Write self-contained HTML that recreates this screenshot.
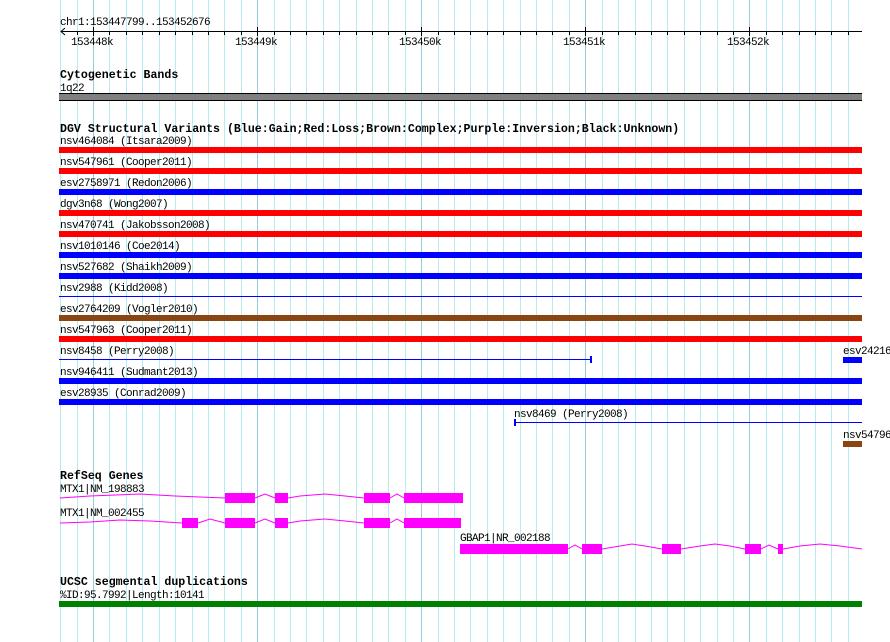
<!DOCTYPE html>
<html><head><meta charset="utf-8"><style>
html,body{margin:0;padding:0;background:#fff;}
svg{display:block;}
text{font-family:"Liberation Mono",monospace;font-size:11px;letter-spacing:-0.6px;fill:#000;}
.t{font-weight:bold;font-size:11.6px;letter-spacing:0;}
</style></head><body>
<svg width="890" height="642" xmlns="http://www.w3.org/2000/svg">
<g stroke="#b4ecef" stroke-width="1">
<line x1="60.5" y1="0" x2="60.5" y2="642"/><line x1="77.5" y1="0" x2="77.5" y2="642"/>
<line x1="109.5" y1="0" x2="109.5" y2="642"/><line x1="126.5" y1="0" x2="126.5" y2="642"/><line x1="142.5" y1="0" x2="142.5" y2="642"/><line x1="159.5" y1="0" x2="159.5" y2="642"/><line x1="175.5" y1="0" x2="175.5" y2="642"/><line x1="192.5" y1="0" x2="192.5" y2="642"/><line x1="208.5" y1="0" x2="208.5" y2="642"/><line x1="224.5" y1="0" x2="224.5" y2="642"/><line x1="241.5" y1="0" x2="241.5" y2="642"/>
<line x1="274.5" y1="0" x2="274.5" y2="642"/><line x1="290.5" y1="0" x2="290.5" y2="642"/><line x1="306.5" y1="0" x2="306.5" y2="642"/><line x1="323.5" y1="0" x2="323.5" y2="642"/><line x1="339.5" y1="0" x2="339.5" y2="642"/><line x1="356.5" y1="0" x2="356.5" y2="642"/><line x1="372.5" y1="0" x2="372.5" y2="642"/><line x1="388.5" y1="0" x2="388.5" y2="642"/><line x1="405.5" y1="0" x2="405.5" y2="642"/>
<line x1="438.5" y1="0" x2="438.5" y2="642"/><line x1="454.5" y1="0" x2="454.5" y2="642"/><line x1="470.5" y1="0" x2="470.5" y2="642"/><line x1="487.5" y1="0" x2="487.5" y2="642"/><line x1="503.5" y1="0" x2="503.5" y2="642"/><line x1="520.5" y1="0" x2="520.5" y2="642"/><line x1="536.5" y1="0" x2="536.5" y2="642"/><line x1="552.5" y1="0" x2="552.5" y2="642"/><line x1="569.5" y1="0" x2="569.5" y2="642"/>
<line x1="602.5" y1="0" x2="602.5" y2="642"/><line x1="618.5" y1="0" x2="618.5" y2="642"/><line x1="635.5" y1="0" x2="635.5" y2="642"/><line x1="651.5" y1="0" x2="651.5" y2="642"/><line x1="667.5" y1="0" x2="667.5" y2="642"/><line x1="684.5" y1="0" x2="684.5" y2="642"/><line x1="700.5" y1="0" x2="700.5" y2="642"/><line x1="717.5" y1="0" x2="717.5" y2="642"/><line x1="733.5" y1="0" x2="733.5" y2="642"/>
<line x1="766.5" y1="0" x2="766.5" y2="642"/><line x1="782.5" y1="0" x2="782.5" y2="642"/><line x1="799.5" y1="0" x2="799.5" y2="642"/><line x1="815.5" y1="0" x2="815.5" y2="642"/><line x1="831.5" y1="0" x2="831.5" y2="642"/><line x1="848.5" y1="0" x2="848.5" y2="642"/>
</g>
<g stroke="#94cce0" stroke-width="1">
<line x1="93.5" y1="0" x2="93.5" y2="642"/><line x1="257.5" y1="0" x2="257.5" y2="642"/><line x1="421.5" y1="0" x2="421.5" y2="642"/><line x1="585.5" y1="0" x2="585.5" y2="642"/><line x1="749.5" y1="0" x2="749.5" y2="642"/>
</g>
<text x="60" y="25">chr1:153447799..153452676</text>
<line x1="61" y1="31.5" x2="862" y2="31.5" stroke="#000"/>
<polyline points="65,28 61,31.5 65,35" fill="none" stroke="#000"/>
<g stroke="#000">
<line x1="77.5" y1="31" x2="77.5" y2="35"/><line x1="93.5" y1="27" x2="93.5" y2="36"/><line x1="109.5" y1="31" x2="109.5" y2="35"/><line x1="126.5" y1="31" x2="126.5" y2="35"/><line x1="142.5" y1="31" x2="142.5" y2="35"/><line x1="159.5" y1="31" x2="159.5" y2="35"/><line x1="175.5" y1="31" x2="175.5" y2="35"/><line x1="192.5" y1="31" x2="192.5" y2="35"/><line x1="208.5" y1="31" x2="208.5" y2="35"/><line x1="224.5" y1="31" x2="224.5" y2="35"/><line x1="241.5" y1="31" x2="241.5" y2="35"/><line x1="257.5" y1="27" x2="257.5" y2="36"/><line x1="274.5" y1="31" x2="274.5" y2="35"/><line x1="290.5" y1="31" x2="290.5" y2="35"/><line x1="306.5" y1="31" x2="306.5" y2="35"/><line x1="323.5" y1="31" x2="323.5" y2="35"/><line x1="339.5" y1="31" x2="339.5" y2="35"/><line x1="356.5" y1="31" x2="356.5" y2="35"/><line x1="372.5" y1="31" x2="372.5" y2="35"/><line x1="388.5" y1="31" x2="388.5" y2="35"/><line x1="405.5" y1="31" x2="405.5" y2="35"/><line x1="421.5" y1="27" x2="421.5" y2="36"/><line x1="438.5" y1="31" x2="438.5" y2="35"/><line x1="454.5" y1="31" x2="454.5" y2="35"/><line x1="470.5" y1="31" x2="470.5" y2="35"/><line x1="487.5" y1="31" x2="487.5" y2="35"/><line x1="503.5" y1="31" x2="503.5" y2="35"/><line x1="520.5" y1="31" x2="520.5" y2="35"/><line x1="536.5" y1="31" x2="536.5" y2="35"/><line x1="552.5" y1="31" x2="552.5" y2="35"/><line x1="569.5" y1="31" x2="569.5" y2="35"/><line x1="585.5" y1="27" x2="585.5" y2="36"/><line x1="602.5" y1="31" x2="602.5" y2="35"/><line x1="618.5" y1="31" x2="618.5" y2="35"/><line x1="635.5" y1="31" x2="635.5" y2="35"/><line x1="651.5" y1="31" x2="651.5" y2="35"/><line x1="667.5" y1="31" x2="667.5" y2="35"/><line x1="684.5" y1="31" x2="684.5" y2="35"/><line x1="700.5" y1="31" x2="700.5" y2="35"/><line x1="717.5" y1="31" x2="717.5" y2="35"/><line x1="733.5" y1="31" x2="733.5" y2="35"/><line x1="749.5" y1="27" x2="749.5" y2="36"/><line x1="766.5" y1="31" x2="766.5" y2="35"/><line x1="782.5" y1="31" x2="782.5" y2="35"/><line x1="799.5" y1="31" x2="799.5" y2="35"/><line x1="815.5" y1="31" x2="815.5" y2="35"/><line x1="831.5" y1="31" x2="831.5" y2="35"/><line x1="848.5" y1="31" x2="848.5" y2="35"/>
</g>
<text x="71" y="45">153448k</text><text x="235" y="45">153449k</text><text x="399" y="45">153450k</text><text x="563" y="45">153451k</text><text x="727" y="45">153452k</text>
<text class="t" x="60" y="78">Cytogenetic Bands</text>
<text x="60" y="91">1q22</text>
<rect x="59" y="93" width="803" height="1" fill="#000"/>
<rect x="59" y="94" width="803" height="6" fill="#808080"/>
<line x1="59" y1="100.5" x2="862" y2="100.5" stroke="#000"/>
<text class="t" x="60" y="132">DGV Structural Variants (Blue:Gain;Red:Loss;Brown:Complex;Purple:Inversion;Black:Unknown)</text>
<text x="60" y="144">nsv464084 (Itsara2009)</text><rect x="59" y="147" width="803" height="6" fill="#f00"/>
<text x="60" y="165">nsv547961 (Cooper2011)</text><rect x="59" y="168" width="803" height="6" fill="#f00"/>
<text x="60" y="186">esv2758971 (Redon2006)</text><rect x="59" y="189" width="803" height="6" fill="#00f"/>
<text x="60" y="207">dgv3n68 (Wong2007)</text><rect x="59" y="210" width="803" height="6" fill="#f00"/>
<text x="60" y="228">nsv470741 (Jakobsson2008)</text><rect x="59" y="231" width="803" height="6" fill="#f00"/>
<text x="60" y="249">nsv1010146 (Coe2014)</text><rect x="59" y="252" width="803" height="6" fill="#00f"/>
<text x="60" y="270">nsv527682 (Shaikh2009)</text><rect x="59" y="273" width="803" height="6" fill="#00f"/>
<text x="60" y="291">nsv2988 (Kidd2008)</text><rect x="59" y="296" width="803" height="1" fill="#00f"/>
<text x="60" y="312">esv2764209 (Vogler2010)</text><rect x="59" y="315" width="803" height="6" fill="#8b4513"/>
<text x="60" y="333">nsv547963 (Cooper2011)</text><rect x="59" y="336" width="803" height="6" fill="#f00"/>
<text x="60" y="354">nsv8458 (Perry2008)</text><rect x="59" y="359" width="532" height="1" fill="#00f"/><rect x="590" y="356" width="2" height="7" fill="#00f"/>
<text x="843" y="354">esv24216</text><rect x="843" y="357" width="19" height="6" fill="#00f"/>
<text x="60" y="375">nsv946411 (Sudmant2013)</text><rect x="59" y="378" width="803" height="6" fill="#00f"/>
<text x="60" y="396">esv28935 (Conrad2009)</text><rect x="59" y="399" width="803" height="6" fill="#00f"/>
<text x="514" y="417">nsv8469 (Perry2008)</text><rect x="514" y="422" width="348" height="1" fill="#00f"/><rect x="514" y="419" width="2" height="7" fill="#00f"/>
<text x="843" y="438">nsv54796</text><rect x="843" y="441" width="19" height="6" fill="#8b4513"/>
<text class="t" x="60" y="479">RefSeq Genes</text>
<text x="60" y="492">MTX1|NM_198883</text>
<polyline points="60,498 90,496 140,494 175,496 225,498" fill="none" stroke="#f0f"/>
<polyline points="255,498 265,494 275,498" fill="none" stroke="#f0f"/>
<polyline points="288,498 300,496 325,494 345,496 364,498" fill="none" stroke="#f0f"/>
<polyline points="390,498 397,494 404,498" fill="none" stroke="#f0f"/>
<g fill="#f0f"><rect x="225" y="493" width="30" height="10"/><rect x="275" y="493" width="13" height="10"/><rect x="364" y="493" width="26" height="10"/><rect x="404" y="493" width="59" height="10"/></g>
<text x="60" y="516">MTX1|NM_002455</text>
<polyline points="60,523 90,522 120,520 150,521 182,523" fill="none" stroke="#f0f"/>
<polyline points="198,523 210,519 225,523" fill="none" stroke="#f0f"/>
<polyline points="255,523 265,519 275,523" fill="none" stroke="#f0f"/>
<polyline points="288,523 300,521 325,519 345,521 364,523" fill="none" stroke="#f0f"/>
<polyline points="390,523 397,519 404,523" fill="none" stroke="#f0f"/>
<g fill="#f0f"><rect x="182" y="518" width="16" height="10"/><rect x="225" y="518" width="30" height="10"/><rect x="275" y="518" width="13" height="10"/><rect x="364" y="518" width="26" height="10"/><rect x="404" y="518" width="57" height="10"/></g>
<text x="460" y="541">GBAP1|NR_002188</text>
<polyline points="568,549 575,545 582,549" fill="none" stroke="#f0f"/>
<polyline points="602,549 620,546 632,544 645,546 662,549" fill="none" stroke="#f0f"/>
<polyline points="681,549 700,546 715,544 730,546 745,549" fill="none" stroke="#f0f"/>
<polyline points="761,549 769,545 778,549" fill="none" stroke="#f0f"/>
<polyline points="783,549 800,546 820,544 840,546 862,549" fill="none" stroke="#f0f"/>
<g fill="#f0f"><rect x="460" y="544" width="108" height="10"/><rect x="582" y="544" width="20" height="10"/><rect x="662" y="544" width="19" height="10"/><rect x="745" y="544" width="16" height="10"/><rect x="778" y="544" width="5" height="10"/></g>
<text class="t" x="60" y="585">UCSC segmental duplications</text>
<text x="60" y="598">%ID:95.7992|Length:10141</text>
<rect x="59" y="601" width="803" height="6" fill="#008000"/>
</svg>
</body></html>
